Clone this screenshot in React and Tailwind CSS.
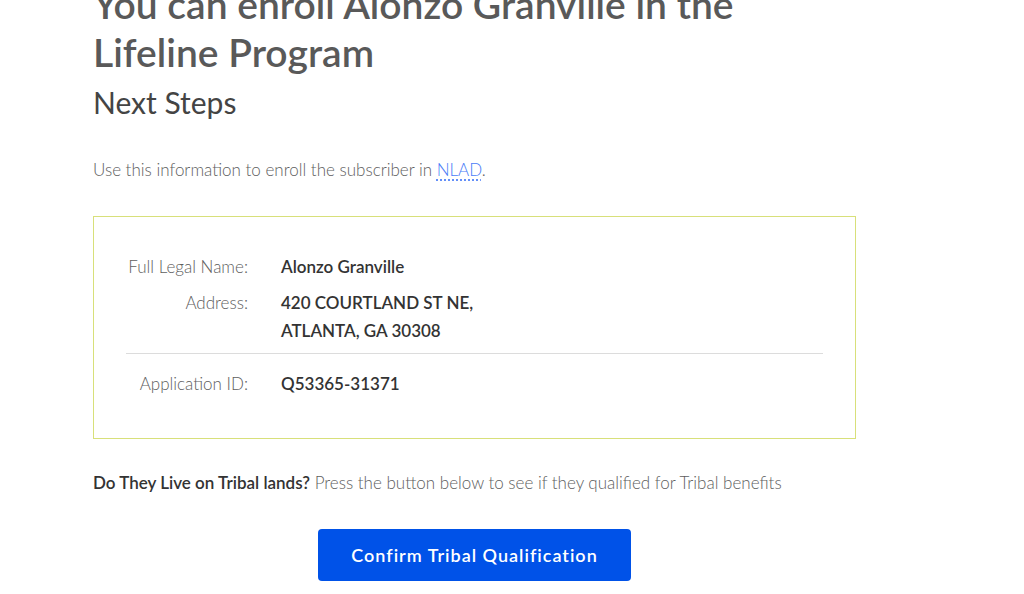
export default function App() {
  return (
    <div className="min-h-[594px] overflow-hidden bg-white font-['Lato',sans-serif] text-[#565656]">
      <div className="pl-[93px] pr-8">
        <h1 className="-mt-[20px] w-[700px] text-[39px] font-semibold leading-[48px] text-[#595959]">
          You can enroll Alonzo Granville in the Lifeline Program
        </h1>
        <h2 className="mt-[6px] text-[30px] font-normal leading-[40px] text-[#444]">Next Steps</h2>
        <p className="mt-[34px] text-[17px] font-light leading-[28px] text-[#5e5e5e]">
          Use this information to enroll the subscriber in{' '}
          <a href="#" className="text-[#4a7cf7] underline decoration-dotted decoration-[#4a7cf7] underline-offset-4">
            NLAD
          </a>
          .
        </p>

        <div className="mt-[32px] w-[763px] border border-[#d8e07a] px-[32px] pt-[36px] pb-[40px]">
          <div className="grid grid-cols-[122px_1fr] gap-x-[33px] gap-y-[8px] text-[17px] leading-[28px]">
            <div className="text-right font-light text-[#5e5e5e]">Full Legal Name:</div>
            <div className="font-semibold text-[#333]">Alonzo Granville</div>
            <div className="text-right font-light text-[#5e5e5e]">Address:</div>
            <div className="font-semibold text-[#333]">
              420 COURTLAND ST NE,
              <br />
              ATLANTA, GA 30308
            </div>
          </div>
          <div className="mt-[8px] mb-[16px] h-px bg-[#dcdcdc]" />
          <div className="grid grid-cols-[122px_1fr] gap-x-[33px] text-[17px] leading-[28px]">
            <div className="text-right font-light text-[#5e5e5e]">Application ID:</div>
            <div className="font-semibold text-[#333]">Q53365-31371</div>
          </div>
        </div>

        <p className="mt-[30px] text-[17px] leading-[28px] font-light text-[#5e5e5e]">
          <span className="font-semibold text-[#333]">Do They Live on Tribal lands?</span> Press the button
          below to see if they qualified for Tribal benefits
        </p>

        <div className="mt-[32px] w-[763px] flex justify-center">
          <button className="h-[52px] w-[313px] rounded-[4px] bg-[#0052e8] text-[18px] font-semibold tracking-[1px] text-white">
            Confirm Tribal Qualification
          </button>
        </div>
      </div>
    </div>
  )
}
